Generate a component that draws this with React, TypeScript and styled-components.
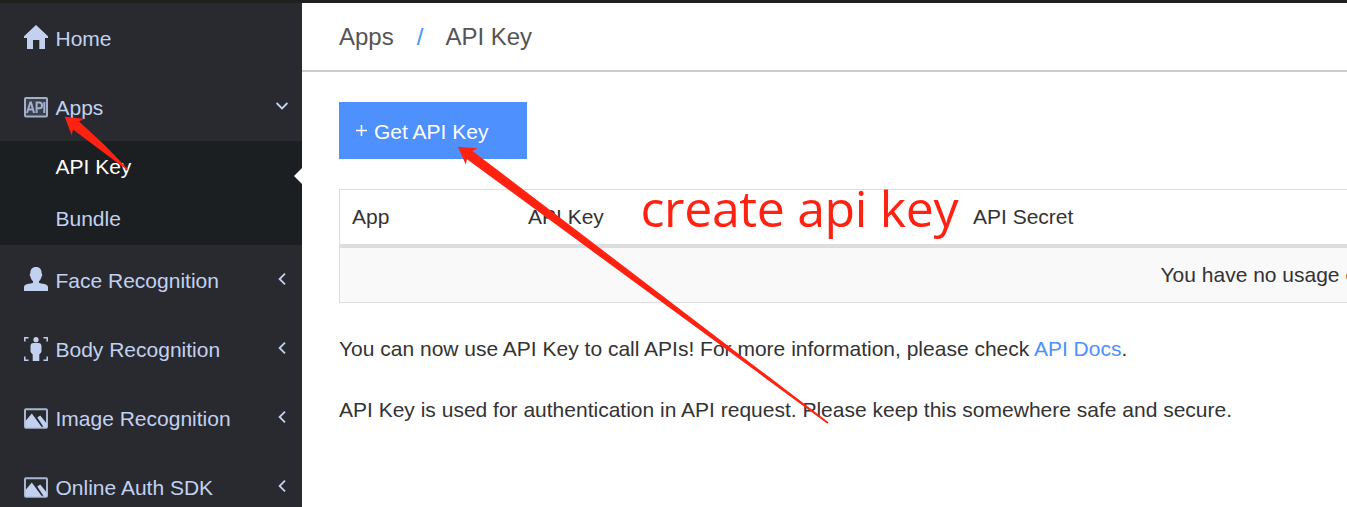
import React from 'react';
import styled, { createGlobalStyle } from 'styled-components';

const GlobalStyle = createGlobalStyle`
  * { box-sizing: border-box; }
  body {
    margin: 0;
    background: #fff;
    font: 21px/30px "Liberation Sans", Arial, sans-serif;
    color: #333;
    overflow: hidden;
  }
`;

const Page = styled.div`
  position: relative;
  display: flex;
  height: 507px;
  border-top: 3px solid #1f1f1f;
  overflow: hidden;
`;

const Sidebar = styled.nav`
  flex: none;
  width: 302px;
  height: 504px;
  overflow: hidden;
  background: #292a2f;
  color: #c2d1f0;
`;

const NavRow = styled.div`
  display: flex;
  align-items: center;
  height: 69px;
  padding: 0 14px 0 24px;
`;

const NavLabel = styled.span`
  flex: 1;
  margin-left: 7.5px;
  padding-top: 3px;
`;

const NavIcon = styled.svg<{ $drop?: number }>`
  display: block;
  width: 24px;
  height: 24px;
  margin-bottom: ${(p) => 2 - 2 * (p.$drop ?? 0)}px;
  fill: #c2d1f0;
`;

const Chevron = styled.svg<{ $open?: boolean }>`
  width: 12px;
  height: 12px;
  fill: none;
  stroke: #c2d1f0;
  stroke-width: 1.8;
  margin-bottom: ${(p) => (p.$open ? 1 : 2)}px;
  transform: ${(p) => (p.$open ? 'rotate(-90deg)' : 'none')};
`;

const SubMenu = styled.div`
  background: #1c1f22;
`;

const SubItem = styled.div<{ $active?: boolean }>`
  display: flex;
  align-items: center;
  justify-content: space-between;
  height: 52px;
  padding-left: 55.5px;
  color: ${(p) => (p.$active ? '#fff' : '#c2d1f0')};
`;

const ActiveMark = styled.svg`
  width: 8px;
  height: 16px;
  margin-top: 17px;
  fill: #fff;
`;

const Main = styled.main`
  flex: 1;
  min-width: 0;
`;

const Breadcrumb = styled.header`
  display: flex;
  align-items: center;
  height: 69px;
  padding-left: 37px;
  border-bottom: 2px solid #ccc;
  font-size: 24px;
  color: #555;
`;

const Separator = styled.span`
  margin: 0 22px 0 23px;
  color: #4d90fe;
`;

const Content = styled.section`
  padding: 30px 0 0 37px;
`;

const PrimaryButton = styled.button`
  display: flex;
  align-items: center;
  width: 188px;
  height: 57px;
  padding: 2px 0 0 17px;
  border: 0;
  background: #4d90fe;
  color: #fff;
  font: inherit;
`;

const Plus = styled.svg`
  width: 11px;
  height: 11px;
  margin: 0 7px 3px 0;
  stroke: #fff;
  stroke-width: 1.6;
`;

const Table = styled.div`
  width: 1900px;
  margin-top: 30px;
  border: 1px solid #ddd;
`;

const HeadRow = styled.div`
  display: grid;
  grid-template-columns: 176px 445px 1fr;
  align-items: center;
  height: 58px;
  padding-left: 12px;
  border-bottom: 4px solid #ddd;
`;

const EmptyRow = styled.div`
  display: flex;
  align-items: center;
  height: 54px;
  padding-left: 820.5px;
  background: #f9f9f9;
`;

const Note = styled.p`
  margin: 31px 0 0;
  white-space: nowrap;
`;

const DocsLink = styled.a`
  color: #4d90fe;
`;

const Overlay = styled.svg`
  position: absolute;
  left: 0;
  top: -3px;
  width: 1347px;
  height: 507px;
  fill: #ff2211;
  pointer-events: none;
`;

const Annotation = styled.span`
  position: absolute;
  left: 640.5px;
  top: 170px;
  font: 50px/70px "Open Sans", "Noto Sans", sans-serif;
  letter-spacing: -0.35px;
  color: #ff2211;
  white-space: nowrap;
`;

const HomeIcon = () => (
  <NavIcon viewBox="0 0 24 24">
    <path d="M12 0 24 11.2V13H21V24H15.3V15H9V24H3V13H0V11.2Z" />
  </NavIcon>
);

const ApiIcon = () => (
  <NavIcon viewBox="0 0 24 24" $drop={1}>
    <rect x="1" y="3" width="22" height="18.5" rx="1" fill="#3c404a" stroke="#a3b0cc" strokeWidth="2" />
    <path d="M3 18 6.3 7.5H7L10 18M4.3 14.5H8.8M12.6 18V7.6H15.2A2.8 2.8 0 0 1 15.2 13.3H12.6M20.3 7V18" fill="none" stroke="#a3b0cc" strokeWidth="2" />
  </NavIcon>
);

const FaceIcon = () => (
  <NavIcon viewBox="0 0 24 24">
    <path d="M12 0C16 0 17.7 2.5 17.7 6.5C18.5 7 18.4 9 17.6 9.5C17 12 16 13.3 15 14.2V15.8C17.5 17 24 16.8 24 20V24H0V20C0 16.8 6.5 17 9 15.8V14.2C8 13.3 7 12 6.4 9.5C5.6 9 5.5 7 6.3 6.5C6.3 2.5 8 0 12 0Z" />
  </NavIcon>
);

const BodyIcon = () => (
  <NavIcon viewBox="0 0 24 24" $drop={1}>
    <path d="M.8 4.5V.8H4.5M19.5.8H23.2V4.5M.8 19.5V23.2H4.5M19.5 23.2H23.2V19.5" fill="none" stroke="#c2d1f0" strokeWidth="1.5" />
    <circle cx="12" cy="2.7" r="2.6" />
    <path d="M9.5 6H14.5C16.8 6 17.5 7.6 17.5 9.5V15L15.3 17.5V24H8.7V17.5L6.5 15V9.5C6.5 7.6 7.2 6 9.5 6Z" />
  </NavIcon>
);

const ImageIcon = () => (
  <NavIcon viewBox="0 0 24 24" $drop={1}>
    <rect x="1" y="3.3" width="22" height="18.4" rx="1" fill="none" stroke="#a9b7d3" strokeWidth="2" />
    <path d="M1.5 15 7.8 7.6 17.3 20.5V21.5H1.5Z" />
    <path d="M13.3 11.6 16.2 9.6 22.8 17.5V21.5H19.8Z" />
  </NavIcon>
);

const Arrow = ({ open }: { open?: boolean }) => (
  <Chevron viewBox="0 0 12 12" $open={open}>
    <path d="M9 .6 3.6 6 9 11.4" />
  </Chevron>
);

const sections = [
  { label: 'Face Recognition', Icon: FaceIcon },
  { label: 'Body Recognition', Icon: BodyIcon },
  { label: 'Image Recognition', Icon: ImageIcon },
  { label: 'Online Auth SDK', Icon: ImageIcon },
];

export default function App() {
  return (
    <>
      <GlobalStyle />
      <Page>
        <Sidebar>
          <NavRow><HomeIcon /><NavLabel>Home</NavLabel></NavRow>
          <NavRow><ApiIcon /><NavLabel>Apps</NavLabel><Arrow open /></NavRow>
          <SubMenu>
            <SubItem $active>
              API Key
              <ActiveMark viewBox="0 0 8 16"><path d="M8 0V16L0 8Z" /></ActiveMark>
            </SubItem>
            <SubItem>Bundle</SubItem>
          </SubMenu>
          {sections.map(({ label, Icon }) => (
            <NavRow key={label}><Icon /><NavLabel>{label}</NavLabel><Arrow /></NavRow>
          ))}
        </Sidebar>
        <Main>
          <Breadcrumb>Apps<Separator>/</Separator>API Key</Breadcrumb>
          <Content>
            <PrimaryButton>
              <Plus viewBox="0 0 11 11"><path d="M0 5.5H11M5.5 0V11" /></Plus>
              Get API Key
            </PrimaryButton>
            <Table>
              <HeadRow><span>App</span><span>API Key</span><span>API Secret</span></HeadRow>
              <EmptyRow>You have no usage of API Key</EmptyRow>
            </Table>
            <Note>You can now use API Key to call APIs! For more information, please check <DocsLink>API Docs</DocsLink>.</Note>
            <Note>API Key is used for authentication in API request. Please keep this somewhere safe and secure.</Note>
          </Content>
        </Main>
        <Overlay viewBox="0 0 1347 507">
          <path d="M64.8 116.8 84 118.7 79 121.5 104 144.5 128 169.2 127 170 99 149 73 129.5 71.7 135.3Z" />
          <path d="M457.8 146.8 477.5 148.3 472.5 151 828.5 422.3 827.5 423.7 467 159.2 465.8 164.5Z" />
        </Overlay>
        <Annotation>create api key</Annotation>
      </Page>
    </>
  );
}
